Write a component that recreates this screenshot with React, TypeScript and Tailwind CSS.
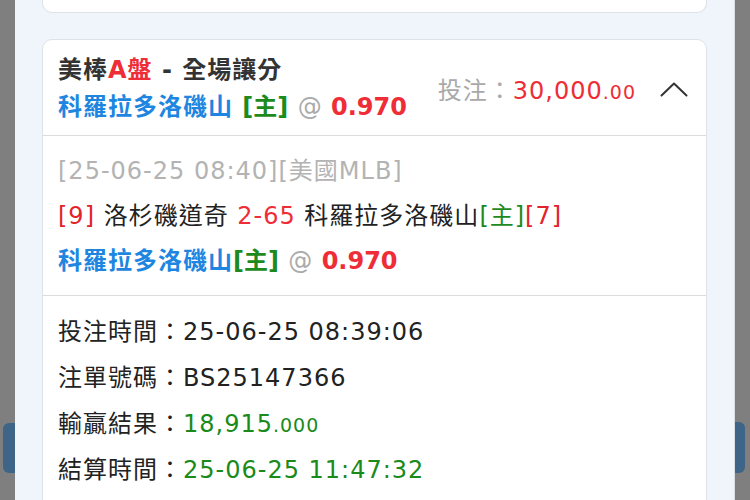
const font = { fontFamily: '"DejaVu Sans", "Noto Sans CJK TC", sans-serif' };

const Row = ({ label, children }: { label: string; children: React.ReactNode }) => (
  <div className="h-[46px] leading-[46px] whitespace-nowrap">
    <span className="text-[#222]">{label}</span>
    <span className="text-[#222]">：</span>
    {children}
  </div>
);

const ChevronUp = () => (
  <svg width="28" height="15" viewBox="0 0 28 15" fill="none">
    <polyline points="1.5,13.5 14,1.5 26.5,13.5" stroke="#333" strokeWidth="2" strokeLinecap="round" strokeLinejoin="round" />
  </svg>
);

const Pick = ({ gap }: { gap: boolean }) => (
  <div className="h-full font-bold whitespace-nowrap">
    <span className="text-[#1e86e0]">科羅拉多洛磯山</span>
    {gap ? ' ' : ''}
    <span className="text-[#1d8a1d] tracking-normal">[主]</span>{' '}
    <span className="text-[#aaa] font-normal tracking-normal">@</span>{' '}
    <span className="text-[#ee2d36] tracking-normal">0.970</span>
  </div>
);

export default function App() {
  return (
    <div className="relative w-[750px] h-[500px] overflow-hidden bg-[#7f7f7f]" style={font}>
      {/* buttons under the overlay */}
      <div className="absolute left-[3px] top-[423px] w-[20px] h-[50px] rounded-[6px] bg-[#3e6588]" />
      <div className="absolute left-[725px] top-[422px] w-[20px] h-[51px] rounded-[6px] bg-[#3e6588]" />

      <div className="relative ml-[15px] w-[720px] h-[500px] bg-[#f0f4fb] border-r border-[#d9dde3] px-[27px] flex flex-col gap-[26px] text-[24px] tracking-[1px]">
        <div className="shrink-0 h-[13px] bg-white border border-t-0 border-[#dde2ea] rounded-b-[10px]" />

        <div className="shrink-0 bg-white border border-[#dde2ea] rounded-[10px] flex flex-col">
          <div className="flex items-center pl-[15px] pr-[18px] pt-[12px] pb-[9px]">
            <div className="flex-1 flex flex-col">
              <div className="h-[37px] leading-[37px] font-semibold text-[#333] whitespace-nowrap">
                美棒<span className="text-[#ee2d36]">A盤</span> - 全場讓分
              </div>
              <div className="h-[37px] leading-[37px]">
                <Pick gap />
              </div>
            </div>
            <div className="flex items-center mt-[4px] whitespace-nowrap">
              <span className="text-[#a9a9a9]">投注：</span>
              <span className="text-[#ee2d36]">30,000</span>
              <span className="text-[#ee2d36] text-[19px] mt-[3px]">.00</span>
              <span className="ml-[24px] -mt-[4px]">
                <ChevronUp />
              </span>
            </div>
          </div>

          <div className="border-t border-[#dcdcdc] pl-[15px] pt-[13px] pb-[11px]">
            <div className="h-[45px] leading-[45px] text-[#b3b3b3] whitespace-nowrap">[25-06-25 08:40][美國MLB]</div>
            <div className="h-[45px] leading-[45px] text-[#222] whitespace-nowrap">
              <span className="text-[#e3222a]">[9]</span> 洛杉磯道奇 <span className="text-[#ee2d36]">2-65</span> 科羅拉多洛磯山
              <span className="text-[#1d8a1d]">[主]</span>
              <span className="text-[#e3222a]">[7]</span>
            </div>
            <div className="h-[45px] leading-[45px]">
              <Pick gap={false} />
            </div>
          </div>

          <div className="border-t border-[#dcdcdc] pl-[15px] pt-[13px] pb-[20px]">
            <Row label="投注時間">
              <span className="text-[#222]">25-06-25 08:39:06</span>
            </Row>
            <Row label="注單號碼">
              <span className="text-[#222]">BS25147366</span>
            </Row>
            <Row label="輸贏結果">
              <span className="text-[#1a8a1a]">18,915</span>
              <span className="text-[#1a8a1a] text-[19px]">.000</span>
            </Row>
            <Row label="結算時間">
              <span className="text-[#1a8a1a]">25-06-25 11:47:32</span>
            </Row>
          </div>
        </div>
      </div>
    </div>
  );
}
